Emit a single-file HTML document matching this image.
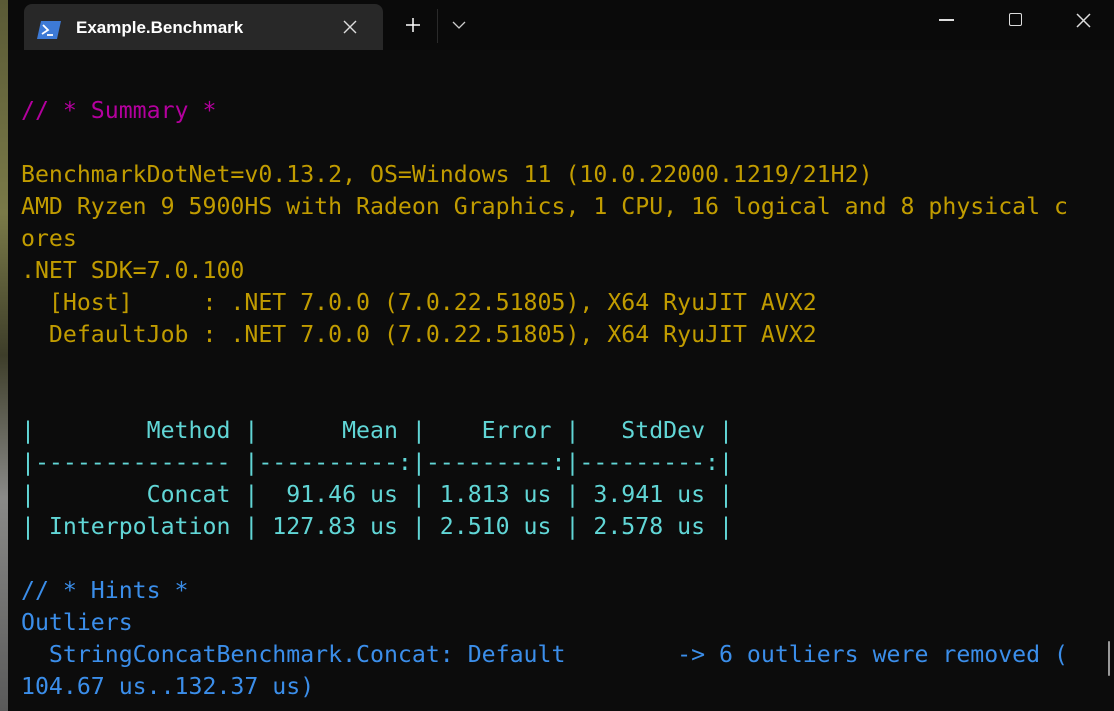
<!DOCTYPE html>
<html><head><meta charset="utf-8"><style>
html,body{margin:0;padding:0;width:1114px;height:711px;overflow:hidden;background:#0c0c0c;}
.wall{position:absolute;left:0;top:0;width:8px;height:711px;background:linear-gradient(#5a5a36,#7a7a48 30%,#3e3e2a 50%,#8a8a88 70%,#5a5a5a);}
.win{position:absolute;left:8px;top:0;right:0;bottom:0;background:#0c0c0c;}
.bar{position:absolute;left:0;top:0;right:0;height:50px;background:#0a0a0a;}
.tab{position:absolute;left:16px;top:4px;width:359px;height:46px;background:#282828;border-radius:8px 8px 0 0;}
.tab .t{position:absolute;left:52px;top:14px;font:600 17px "Liberation Sans",sans-serif;color:#fff;}
.term{position:absolute;left:13px;top:95px;font:23.2px/32px "DejaVu Sans Mono","Liberation Mono",monospace;white-space:pre;}
.m{color:#b4009e}.y{color:#c19c00}.c{color:#61d6d6}.b{color:#3b8eea}
</style></head><body>
<div class="wall"></div>
<div class="win">
<div class="bar">
<div class="tab">
<svg style="position:absolute;left:13px;top:17px" width="24" height="18" viewBox="0 0 24 18"><path d="M4 0H24L20 18H0Z" fill="#3d7ad6"/><path d="M6 4L11 9L5 13" stroke="#fff" stroke-width="1.8" fill="none"/><path d="M10 14H16" stroke="#fff" stroke-width="1.8"/></svg>
<div class="t">Example.Benchmark</div>
<svg style="position:absolute;left:319px;top:16px" width="14" height="14"><path d="M1 1L13 13M13 1L1 13" stroke="#ddd" stroke-width="1.4"/></svg>
</div>
<svg style="position:absolute;left:397px;top:17px" width="16" height="16"><path d="M8 1V15M1 8H15" stroke="#fff" stroke-width="1.5"/></svg>
<div style="position:absolute;left:429px;top:9px;width:1px;height:34px;background:#2a2a2a"></div>
<svg style="position:absolute;left:444px;top:21px" width="14" height="8"><path d="M1 1L7 7L13 1" stroke="#ccc" stroke-width="1.3" fill="none"/></svg>
<div style="position:absolute;left:931px;top:19px;width:15px;height:1.5px;background:#ddd"></div>
<div style="position:absolute;left:1001px;top:13px;width:11px;height:11px;border:1.5px solid #ddd;border-radius:2px"></div>
<svg style="position:absolute;left:1068px;top:13px" width="15" height="15"><path d="M1 1L14 14M14 1L1 14" stroke="#ddd" stroke-width="1.5"/></svg>
</div>
<div class="term"><span class="m">// * Summary *</span>

<span class="y">BenchmarkDotNet=v0.13.2, OS=Windows 11 (10.0.22000.1219/21H2)
AMD Ryzen 9 5900HS with Radeon Graphics, 1 CPU, 16 logical and 8 physical c
ores
.NET SDK=7.0.100
  [Host]     : .NET 7.0.0 (7.0.22.51805), X64 RyuJIT AVX2
  DefaultJob : .NET 7.0.0 (7.0.22.51805), X64 RyuJIT AVX2</span>


<span class="c">|        Method |      Mean |    Error |   StdDev |
|-------------- |----------:|---------:|---------:|
|        Concat |  91.46 us | 1.813 us | 3.941 us |
| Interpolation | 127.83 us | 2.510 us | 2.578 us |</span>

<span class="b">// * Hints *
Outliers
  StringConcatBenchmark.Concat: Default        -&gt; 6 outliers were removed (
104.67 us..132.37 us)</span></div>
<div style="position:absolute;left:1100px;top:641px;width:2px;height:35px;background:#9a9a9a;border-radius:1px"></div>
</div>
</body></html>
